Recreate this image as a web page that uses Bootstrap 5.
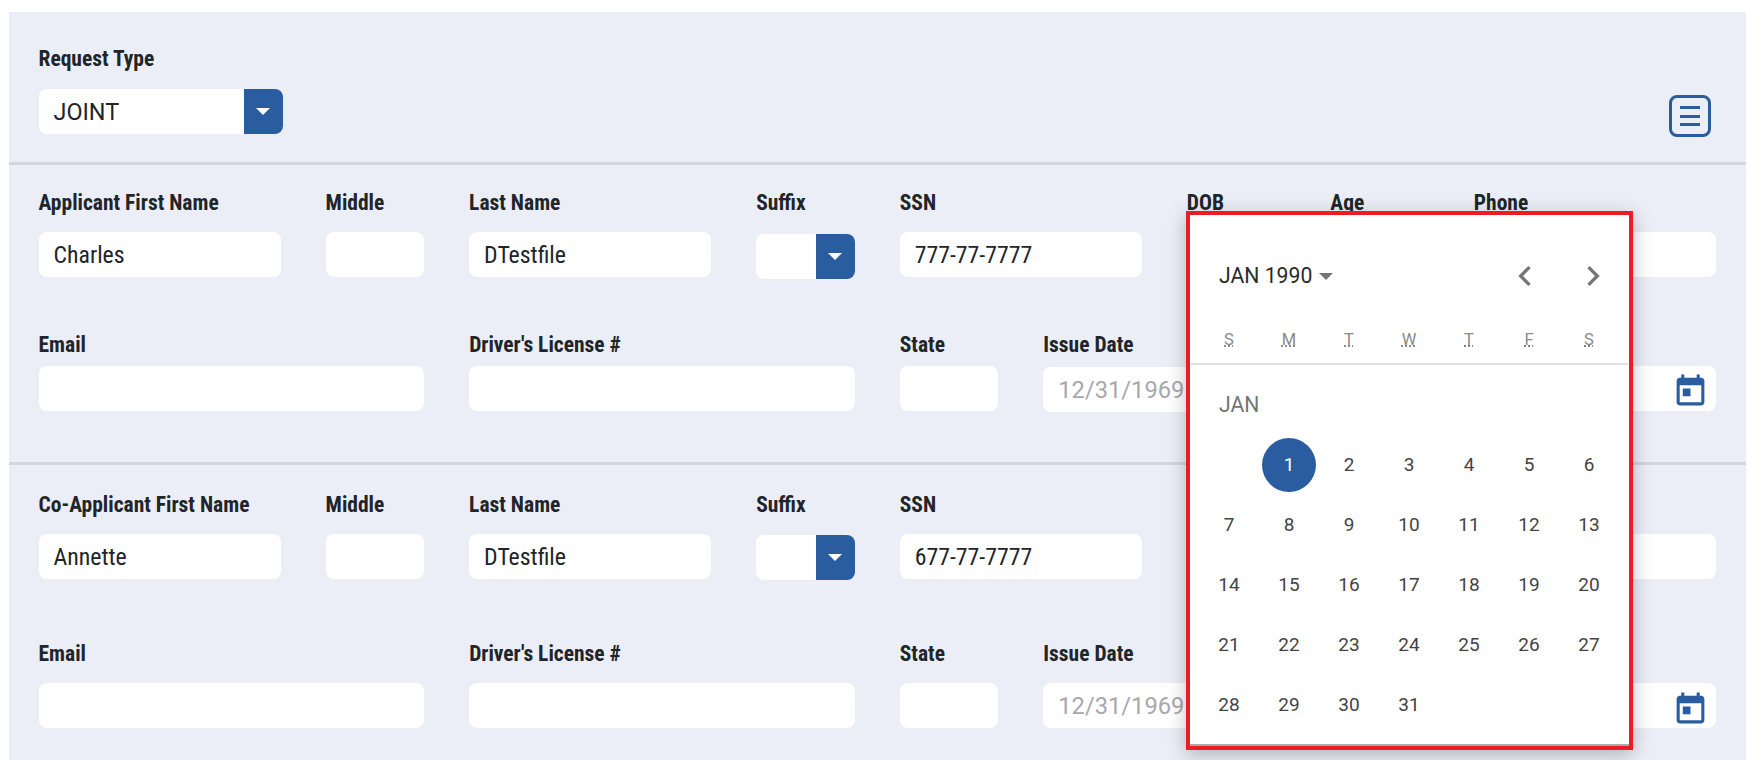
<!DOCTYPE html>
<html lang="en">
<head>
  <meta charset="UTF-8">
  <title>Request</title>
  <link href="https://cdn.jsdelivr.net/npm/bootstrap@5.3.2/dist/css/bootstrap.min.css" rel="stylesheet">
  <style>
    body { margin: 12px 12px 0 9px; font-family: Roboto, "Liberation Sans", sans-serif; color: #212529; overflow: hidden; }
    .req-panel { background: #ebeef6; height: 760px; }
    .req-section { padding: 25px 30px 0 29.5px; }
    .req-section-first { padding-top: 34px; height: 149.5px; }
    .req-section-main { height: 300.5px; border-top: 3px solid #d2d6de; }
    .req-section-co { padding-top: 27px; }
    .req-row { --bs-gutter-x: 45px; }
    .req-row-next { margin-top: 53px; }
    .req-row-wide { margin-top: 61px; }
    .req-label { display: block; font-family: "Roboto Condensed", "Liberation Sans Narrow", Roboto, sans-serif; font-weight: 700; font-size: 21.5px; line-height: 24px; padding-top: 1px; margin-bottom: 17px; white-space: nowrap; color: #212529; }
    .req-label-type { margin-bottom: 18px; }
    .req-label-low { margin-bottom: 19px; }
    .req-label-co { margin-bottom: 18px; }
    .req-label-tight { margin-bottom: 9px; }
    .req-label-date { margin-bottom: 10px; }
    .req-input { display: block; width: 100%; height: 45px; border: 0; outline: 0; border-radius: 8px; background: #fff; padding: 1px 15px 0; font-size: 23.8px; color: #212529; font-family: "Roboto Condensed", "Liberation Sans Narrow", Roboto, sans-serif; }
    .req-input::placeholder { color: #a8a8ad; opacity: 1; font-family: Roboto, sans-serif; font-size: 23.7px; }
    .req-select { display: flex; height: 45px; border-radius: 8px; overflow: hidden; background: #fff; }
    .req-select-type { width: 244px; }
    .req-select-value { flex: 1; padding: 0 15px; font-size: 23.4px; line-height: 46px; }
    .req-select-btn { width: 39px; background: #2a5d9f; display: flex; align-items: center; justify-content: center; }
    .req-select-btn i { border-left: 7.5px solid transparent; border-right: 7.5px solid transparent; border-top: 7.5px solid #fff; }
    .req-menu { width: 42px; height: 42px; border: 3px solid #2a5d9f; border-radius: 8px; background: none; padding: 8px; margin: 49px 5px 0 0; display: flex; flex-direction: column; justify-content: space-between; }
    .req-menu span { display: block; height: 3px; background: #2a5d9f; }
    .req-date-icon { position: absolute; right: 7px; top: 7.5px; width: 37px; height: 37px; fill: #2a5d9f; }
    .cal-pop { position: absolute; left: 1177px; top: 199px; width: 447px; height: 539px; border: 4px solid #ed1c24; background: #fff; box-shadow: 0 5px 18px rgba(0,0,0,.25); z-index: 5; }
    .cal-inner { height: 531px; border-bottom: 2px solid #a9a9ae; padding: 36px 10px 0 9px; }
    .cal-head { height: 50px; padding-left: 20px; font-size: 21.2px; color: #2b2b2b; }
    .cal-caret { border-left: 7.5px solid transparent; border-right: 7.5px solid transparent; border-top: 7px solid #757575; margin-left: 7px; }
    .cal-nav { width: 40px; height: 40px; fill: #757575; }
    .cal-nav-wrap { margin-right: 6px; gap: 28px; }
    .cal-table { width: 420px; table-layout: fixed; text-align: center; font-size: 19px; color: #444; }
    .cal-table th { height: 24px; padding: 27px 0 9.5px; font-weight: 400; font-size: 16.5px; color: #8a8a8a; }
    .cal-table th abbr { text-decoration-color: #666; }
    .cal-rule { height: 2px; background: #e0e0e0; margin: 0 -10px 0 -9px; }
    .cal-month { padding: 27px 0 18px 20px; height: 69px; line-height: 24px; text-align: left; font-size: 21.2px; color: #757575; }
    .cal-table td.cal-day { height: 60px; padding: 0; }
    .cal-sel { display: flex; align-items: center; justify-content: center; width: 54px; height: 54px; margin: 0 auto; border-radius: 50%; background: #2a5d9f; color: #fff; }
  </style>
</head>
<body>
  <div class="req-panel position-relative">
    <div class="req-section req-section-first d-flex justify-content-between align-items-start">
      <div>
        <label class="req-label req-label-type">Request Type</label>
        <div class="req-select req-select-type">
          <div class="req-select-value">JOINT</div>
          <div class="req-select-btn"><i></i></div>
        </div>
      </div>
      <button class="req-menu" type="button" aria-label="Menu"><span></span><span></span><span></span></button>
    </div>

    <!-- Applicant -->
    <div class="req-section req-section-main">
      <div class="row req-row">
        <div class="col-2"><label class="req-label">Applicant First Name</label><input class="req-input" value="Charles"></div>
        <div class="col-1"><label class="req-label">Middle</label><input class="req-input"></div>
        <div class="col-2"><label class="req-label">Last Name</label><input class="req-input" value="DTestfile"></div>
        <div class="col-1"><label class="req-label req-label-low">Suffix</label><div class="req-select"><div class="req-select-value"></div><div class="req-select-btn"><i></i></div></div></div>
        <div class="col-2"><label class="req-label">SSN</label><input class="req-input" value="777-77-7777"></div>
        <div class="col-1"><label class="req-label">DOB</label><input class="req-input"></div>
        <div class="col-1"><label class="req-label">Age</label><input class="req-input"></div>
        <div class="col-2"><label class="req-label">Phone</label><input class="req-input"></div>
      </div>
      <div class="row req-row req-row-next">
        <div class="col-3"><label class="req-label req-label-tight">Email</label><input class="req-input"></div>
        <div class="col-3"><label class="req-label req-label-tight">Driver's License #</label><input class="req-input"></div>
        <div class="col-1"><label class="req-label req-label-tight">State</label><input class="req-input"></div>
        <div class="col-2"><label class="req-label req-label-date">Issue Date</label><input class="req-input" placeholder="12/31/1969"></div>
        <div class="col-1"><label class="req-label req-label-tight">&nbsp;</label><input class="req-input"></div>
        <div class="col-2"><label class="req-label req-label-tight">&nbsp;</label>
          <div class="position-relative"><input class="req-input">
            <svg class="req-date-icon" viewBox="0 0 24 24"><path d="M19 3h-1V1h-2v2H8V1H6v2H5c-1.11 0-1.99.9-1.99 2L3 19c0 1.1.89 2 2 2h14c1.1 0 2-.9 2-2V5c0-1.1-.9-2-2-2zm0 16H5V8h14v11zM7 10h5v5H7z"/></svg>
          </div>
        </div>
      </div>
    </div>

    <!-- Co-Applicant -->
    <div class="req-section req-section-main req-section-co">
      <div class="row req-row">
        <div class="col-2"><label class="req-label">Co-Applicant First Name</label><input class="req-input" value="Annette"></div>
        <div class="col-1"><label class="req-label">Middle</label><input class="req-input"></div>
        <div class="col-2"><label class="req-label">Last Name</label><input class="req-input" value="DTestfile"></div>
        <div class="col-1"><label class="req-label req-label-co">Suffix</label><div class="req-select"><div class="req-select-value"></div><div class="req-select-btn"><i></i></div></div></div>
        <div class="col-2"><label class="req-label">SSN</label><input class="req-input" value="677-77-7777"></div>
        <div class="col-1"><label class="req-label">&nbsp;</label><input class="req-input"></div>
        <div class="col-1"><label class="req-label">&nbsp;</label><input class="req-input"></div>
        <div class="col-2"><label class="req-label">&nbsp;</label><input class="req-input"></div>
      </div>
      <div class="row req-row req-row-wide">
        <div class="col-3"><label class="req-label">Email</label><input class="req-input"></div>
        <div class="col-3"><label class="req-label">Driver's License #</label><input class="req-input"></div>
        <div class="col-1"><label class="req-label">State</label><input class="req-input"></div>
        <div class="col-2"><label class="req-label">Issue Date</label><input class="req-input" placeholder="12/31/1969"></div>
        <div class="col-1"><label class="req-label">&nbsp;</label><input class="req-input"></div>
        <div class="col-2"><label class="req-label">&nbsp;</label>
          <div class="position-relative"><input class="req-input">
            <svg class="req-date-icon" viewBox="0 0 24 24"><path d="M19 3h-1V1h-2v2H8V1H6v2H5c-1.11 0-1.99.9-1.99 2L3 19c0 1.1.89 2 2 2h14c1.1 0 2-.9 2-2V5c0-1.1-.9-2-2-2zm0 16H5V8h14v11zM7 10h5v5H7z"/></svg>
          </div>
        </div>
      </div>
    </div>

    <!-- Date picker popup -->
    <div class="cal-pop">
      <div class="cal-inner">
        <div class="cal-head d-flex align-items-center">
          <span>JAN 1990</span><i class="cal-caret"></i>
          <div class="cal-nav-wrap d-flex ms-auto">
            <svg class="cal-nav" viewBox="0 0 24 24"><path d="M15.41 7.41L14 6l-6 6 6 6 1.41-1.41L10.83 12z"/></svg>
            <svg class="cal-nav" viewBox="0 0 24 24"><path d="M10 6L8.59 7.41 13.17 12l-4.58 4.59L10 18l6-6z"/></svg>
          </div>
        </div>
        <table class="cal-table">
          <thead>
            <tr>
              <th><abbr title="Sunday">S</abbr></th><th><abbr title="Monday">M</abbr></th><th><abbr title="Tuesday">T</abbr></th><th><abbr title="Wednesday">W</abbr></th><th><abbr title="Thursday">T</abbr></th><th><abbr title="Friday">F</abbr></th><th><abbr title="Saturday">S</abbr></th>
            </tr>
            <tr><td colspan="7"><div class="cal-rule"></div></td></tr>
          </thead>
          <tbody>
            <tr><td colspan="7" class="cal-month">JAN</td></tr>
            <tr><td class="cal-day"></td><td class="cal-day"><span class="cal-sel">1</span></td><td class="cal-day">2</td><td class="cal-day">3</td><td class="cal-day">4</td><td class="cal-day">5</td><td class="cal-day">6</td></tr>
            <tr><td class="cal-day">7</td><td class="cal-day">8</td><td class="cal-day">9</td><td class="cal-day">10</td><td class="cal-day">11</td><td class="cal-day">12</td><td class="cal-day">13</td></tr>
            <tr><td class="cal-day">14</td><td class="cal-day">15</td><td class="cal-day">16</td><td class="cal-day">17</td><td class="cal-day">18</td><td class="cal-day">19</td><td class="cal-day">20</td></tr>
            <tr><td class="cal-day">21</td><td class="cal-day">22</td><td class="cal-day">23</td><td class="cal-day">24</td><td class="cal-day">25</td><td class="cal-day">26</td><td class="cal-day">27</td></tr>
            <tr><td class="cal-day">28</td><td class="cal-day">29</td><td class="cal-day">30</td><td class="cal-day">31</td><td class="cal-day"></td><td class="cal-day"></td><td class="cal-day"></td></tr>
          </tbody>
        </table>
      </div>
    </div>
  </div>
</body>
</html>
